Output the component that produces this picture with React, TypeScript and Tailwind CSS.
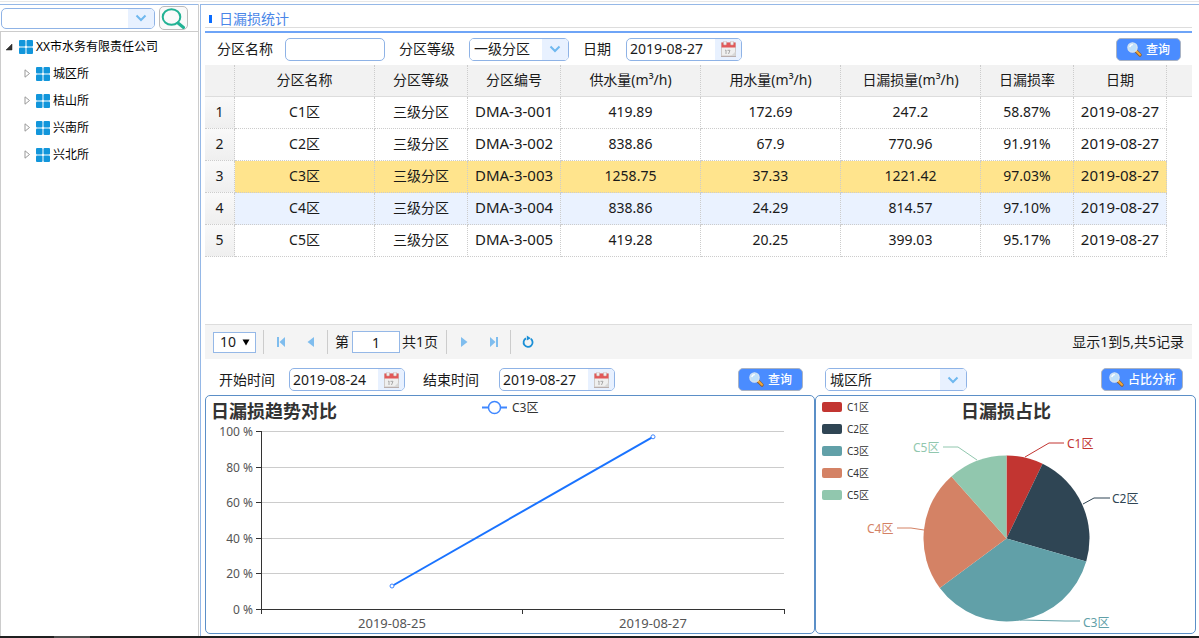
import { useState, type ReactNode } from 'react'

interface Zone {
  name: string
  code: string
  supply: string
  usage: string
  loss: string
  rate: string
  color: string
}

const DAY = '2019-08-27'

const zones: Zone[] = [
  { name: 'C1区', code: 'DMA-3-001', supply: '419.89', usage: '172.69', loss: '247.2', rate: '58.87%', color: '#c23531' },
  { name: 'C2区', code: 'DMA-3-002', supply: '838.86', usage: '67.9', loss: '770.96', rate: '91.91%', color: '#2f4554' },
  { name: 'C3区', code: 'DMA-3-003', supply: '1258.75', usage: '37.33', loss: '1221.42', rate: '97.03%', color: '#61a0a8' },
  { name: 'C4区', code: 'DMA-3-004', supply: '838.86', usage: '24.29', loss: '814.57', rate: '97.10%', color: '#d48265' },
  { name: 'C5区', code: 'DMA-3-005', supply: '419.28', usage: '20.25', loss: '399.03', rate: '95.17%', color: '#91c7ae' },
]

const headers = ['分区名称', '分区等级', '分区编号', '供水量(m³/h)', '用水量(m³/h)', '日漏损量(m³/h)', '日漏损率', '日期']

const stations = ['城区所', '桔山所', '兴南所', '兴北所']

function Chevron() {
  return (
    <svg width="12" height="8" viewBox="0 0 12 8" fill="none" stroke="#6fb8ef" strokeWidth="2">
      <path d="M1.500 1.500 6 6l4.500-4.500" />
    </svg>
  )
}

function CalendarIcon() {
  return (
    <svg width="15" height="16" viewBox="0 0 15 16">
      <rect x="0.500" y="2" width="14" height="13" fill="#efefef" stroke="#cfcac8" />
      <rect x="0.500" y="1.500" width="14" height="5" fill="#e2595a" />
      <rect x="2.500" y="0" width="3" height="4" rx="1" fill="#eee" stroke="#c9a7a7" strokeWidth="0.5" />
      <rect x="9.500" y="0" width="3" height="4" rx="1" fill="#eee" stroke="#c9a7a7" strokeWidth="0.5" />
      <path d="M4 9.500 5 9v4M6.500 9.300h2.500L7.500 13" fill="none" stroke="#a8a8a8" />
      <path d="M14.500 10.500 10 15h4.500z" fill="#d8d8d8" />
      <path d="M0 15.500h15" stroke="#b9aead" />
    </svg>
  )
}

function LensIcon() {
  return (
    <svg width="15" height="15" viewBox="0 0 15 15" className="shrink-0">
      <path d="m8.500 8.500 4.500 4.500" stroke="#8a5a2b" strokeWidth="3.200" strokeLinecap="round" />
      <path d="m9 8.800 4 4" stroke="#f2a93b" strokeWidth="2" strokeLinecap="round" />
      <circle cx="5.500" cy="5.500" r="4.600" fill="#bfe0fb" stroke="#dbe6f0" strokeWidth="1.300" />
      <path d="M2.800 5.200a3 3 0 0 1 3-2.500" stroke="#fff" strokeWidth="1.300" fill="none" />
    </svg>
  )
}

function FourSquares() {
  return (
    <svg width="14" height="14" viewBox="0 0 14 14" fill="#1296db">
      <rect width="6.500" height="6.500" rx="1" />
      <rect x="7.500" width="6.500" height="6.500" rx="1" />
      <rect y="7.500" width="6.500" height="6.500" rx="1" />
      <rect x="7.500" y="7.500" width="6.500" height="6.500" rx="1" />
    </svg>
  )
}

function Label({ htmlFor, children }: { htmlFor: string; children: ReactNode }) {
  return <label htmlFor={htmlFor} className="w-14 shrink-0">{children}</label>
}

function DateBox({ id, value }: { id: string; value: string }) {
  return (
    <div className="flex h-[23px] w-[116px] shrink-0 overflow-hidden rounded-[5px] border border-[#8fb3e6] bg-white">
      <input id={id} defaultValue={value} className="w-[88px] min-w-0 pl-[3px] leading-5 outline-none" />
      <button aria-label="选择日期" className="flex flex-1 items-center justify-center bg-[#e8f1ff]">
        <CalendarIcon />
      </button>
    </div>
  )
}

function SelectBox({ id, label, options, className }: { id: string; label?: string; options: string[]; className: string }) {
  return (
    <div className={`relative h-[23px] shrink-0 overflow-hidden rounded-[5px] border border-[#8fb3e6] ${className}`}>
      <select id={id} aria-label={label} className="block h-full w-full appearance-none bg-white pr-7 pl-1 leading-5 outline-none">
        {options.map((o) => <option key={o}>{o}</option>)}
      </select>
      <span className="pointer-events-none absolute inset-y-0 right-0 flex w-[26px] items-center justify-center bg-[#e8f1ff]">
        <Chevron />
      </span>
    </div>
  )
}

function QueryButton({ className, children }: { className: string; children: ReactNode }) {
  return (
    <button className={`ml-auto flex h-[23px] shrink-0 items-center rounded-[5px] border border-[#a9b3c4] bg-[#4a8cff] text-xs font-medium text-white ${className}`}>
      <LensIcon />
      <span className="pt-px whitespace-nowrap">{children}</span>
    </button>
  )
}

function Sidebar() {
  return (
    <aside className="flex w-[199px] shrink-0 flex-col border-r border-[#ccc]">
      <div className="flex h-7 items-center gap-1 border-t border-b border-t-[#95b8e7] border-b-[#ccc] pl-px">
        <div className="flex h-[21px] w-[154px] overflow-hidden rounded-[5px] border border-[#8fb3e6]">
          <input aria-label="搜索分区" className="min-w-0 flex-1 px-1 text-xs outline-none" />
          <button aria-label="展开" className="flex w-[26px] items-center justify-center bg-[#e8f1ff]"><Chevron /></button>
        </div>
        <button aria-label="搜索" className="flex h-6 w-[29px] items-center justify-center rounded-[5px] border border-[#bbb] bg-[#fafafa]">
          <svg width="25" height="21" viewBox="0 0 25 21" fill="none" stroke="#22b294">
            <ellipse cx="10.500" cy="9" rx="8.800" ry="7.800" strokeWidth="2" />
            <path d="m17 15 5.500 4.500" strokeWidth="3" strokeLinecap="round" />
          </svg>
        </button>
      </div>
      <div className="flex-1 border-l border-[#ccc] pt-px text-xs text-black">
        <div className="flex h-[27px] items-center pl-1">
          <svg width="8" height="8" viewBox="0 0 8 8" className="mr-[6px]">
            <path d="M7 1v6H1z" fill="#333" stroke="#222" strokeWidth="0.5" />
          </svg>
          <FourSquares />
          <span className="ml-[3px]">XX市水务有限责任公司</span>
        </div>
        {stations.map((s) => (
          <div key={s} className="flex h-[27px] items-center pl-[23px]">
            <svg width="7" height="9" viewBox="0 0 7 9" className="mr-[5px]">
              <path d="M1 .8v7.400l4.500-3.700z" fill="#fff" stroke="#999" />
            </svg>
            <FourSquares />
            <span className="ml-[3px]">{s}</span>
          </div>
        ))}
      </div>
    </aside>
  )
}

function ZoneTable() {
  const [selected, setSelected] = useState('C3区')
  const cell = 'border-r border-b border-dotted border-[#ccc] p-0 pb-[2px]'

  function rowColor(z: Zone) {
    if (z.name === selected) return 'bg-[#ffe48d]'
    return z.name === 'C4区' ? 'bg-[#eaf2ff]' : 'bg-white'
  }

  return (
    <table className="w-full table-fixed border-separate border-spacing-0 text-center text-sm">
      <colgroup>
        <col className="w-[30px]" />
        <col className="w-[140px]" />
        <col className="w-[93px]" />
        <col className="w-[93px]" />
        <col className="w-[140px]" />
        <col className="w-[140px]" />
        <col className="w-[140px]" />
        <col className="w-[93px]" />
        <col className="w-[93px]" />
        <col />
      </colgroup>
      <thead className="bg-[#f2f2f2]">
        <tr className="h-8">
          <th className="border-r border-b border-r-[#ccc] border-b-[#ddd] [border-right-style:dotted] p-0" />
          {headers.map((h) => (
            <th key={h} className="border-r border-b border-r-[#ccc] border-b-[#ddd] [border-right-style:dotted] p-0 pb-[2px] font-normal">{h}</th>
          ))}
          <th className="border-b border-[#ddd] p-0" />
        </tr>
      </thead>
      <tbody>
        {zones.map((z, i) => (
          <tr key={z.name} className="h-8" onClick={() => setSelected(z.name)}>
            <td className={`${cell} bg-linear-to-b from-[#f9f9f9] to-[#efefef]`}>{i + 1}</td>
            <td className={`${cell} ${rowColor(z)}`}>{z.name}</td>
            <td className={`${cell} ${rowColor(z)}`}>三级分区</td>
            <td className={`${cell} ${rowColor(z)} text-[15px]`}>{z.code}</td>
            <td className={`${cell} ${rowColor(z)}`}>{z.supply}</td>
            <td className={`${cell} ${rowColor(z)}`}>{z.usage}</td>
            <td className={`${cell} ${rowColor(z)}`}>{z.loss}</td>
            <td className={`${cell} ${rowColor(z)}`}>{z.rate}</td>
            <td className={`${cell} ${rowColor(z)} text-[15px]`}>{DAY}</td>
            <td className="p-0" />
          </tr>
        ))}
      </tbody>
    </table>
  )
}

function PageButton({ label, children }: { label: string; children: ReactNode }) {
  return (
    <button aria-label={label} className="flex h-6 w-[30px] items-center justify-center">
      <svg width="14" height="14" viewBox="0 0 14 14" fill="#7fbdee">{children}</svg>
    </button>
  )
}

function Divider() {
  return <span className="h-6 w-px bg-[#ccc]" />
}

function Pager() {
  return (
    <div className="flex h-[35px] shrink-0 items-center border-t border-[#ddd] bg-[#f4f4f4] pr-2 pl-2">
      <div className="relative mr-[7px]">
        <select aria-label="每页条数" className="block h-[21px] w-[43px] appearance-none border border-[#95b8e7] bg-white pl-[6px] leading-4 outline-none">
          <option>10</option>
          <option>20</option>
        </select>
        <svg width="8" height="7" viewBox="0 0 8 7" className="pointer-events-none absolute top-[7px] right-[6px]">
          <path d="M.5.500h7L4 6.500z" fill="#000" />
        </svg>
      </div>
      <Divider />
      <span className="w-[2px]" />
      <PageButton label="首页"><path d="M3 2h2v10H3zM11 2v10L5.500 7z" /></PageButton>
      <PageButton label="上一页"><path d="M10 2v10L3.500 7z" /></PageButton>
      <span className="w-px" />
      <Divider />
      <label htmlFor="page" className="mr-[3px] ml-[7px]">第</label>
      <input id="page" defaultValue="1" className="mr-[2px] h-[22px] w-12 border border-[#95b8e7] bg-white text-center outline-none" />
      <span className="mr-2">共1页</span>
      <Divider />
      <span className="w-[2px]" />
      <PageButton label="下一页"><path d="M4 2v10l6.500-5z" /></PageButton>
      <PageButton label="末页"><path d="M3 2v10l5.500-5zM9 2h2v10H9z" /></PageButton>
      <span className="w-px" />
      <Divider />
      <span className="w-[2px]" />
      <PageButton label="刷新">
        <path d="M9.800 3.800A4.500 4.500 0 1 1 5 3.400" fill="none" stroke="#1b8fd6" strokeWidth="1.800" />
        <path d="m5.800.600 4 2.600-4 2.400z" fill="#1b8fd6" />
      </PageButton>
      <span className="ml-auto">显示1到5,共5记录</span>
    </div>
  )
}

const ticks = [
  { label: '100 %', y: 35.5 },
  { label: '80 %', y: 71.5 },
  { label: '60 %', y: 106.5 },
  { label: '40 %', y: 142.5 },
  { label: '20 %', y: 177.5 },
  { label: '0 %', y: 213.5 },
]

function TrendChart() {
  return (
    <svg viewBox="0 0 608 237" className="block w-full text-xs" fill="#555">
      <text x="5" y="22" fill="#333" className="text-lg font-bold">日漏损趋势对比</text>
      <path d="M276 11.500h25" stroke="#3f87ff" strokeWidth="2" />
      <circle cx="288.500" cy="11.500" r="6" fill="#fff" stroke="#3f87ff" strokeWidth="1.500" />
      <text x="306" y="16" fill="#333">C3区</text>
      {ticks.map((t) => (
        <g key={t.label}>
          <path d={`M55 ${t.y}H578`} stroke="#ccc" />
          <path d={`M50 ${t.y}h5`} stroke="#333" />
          <text x="47" y={t.y + 4.5} textAnchor="end">{t.label}</text>
        </g>
      ))}
      <path d="M55.500 35v183M55 213.500h524M316.500 213v5M578.500 213v5" fill="none" stroke="#333" />
      <path d="m186 190 261-149.200" stroke="#1a73ff" strokeWidth="2" />
      <circle cx="186" cy="190" r="2" fill="#fff" stroke="#3f87ff" />
      <circle cx="447" cy="40.800" r="2" fill="#fff" stroke="#3f87ff" />
      <text x="186" y="232" textAnchor="middle" className="text-[13px]">2019-08-25</text>
      <text x="447" y="232" textAnchor="middle" className="text-[13px]">2019-08-27</text>
    </svg>
  )
}

const callouts = [
  { line: '209,61 233,47 248,47', x: 251, y: 52 },
  { line: '267,108 278,102 294,102', x: 296, y: 107 },
  { line: '204,224 249,225 264,225', x: 267, y: 231 },
  { line: '108,134 95,132 81,132', x: 51, y: 137 },
  { line: '161,64 142,51 127,51', x: 97, y: 56 },
]

const CX = 190.5
const CY = 142.5
const R = 83

function slicePath(from: number, to: number) {
  const point = (t: number) => `${CX + R * Math.sin(t * 2 * Math.PI)} ${CY - R * Math.cos(t * 2 * Math.PI)}`
  return `M${CX} ${CY}L${point(from)}A${R} ${R} 0 ${to - from > 0.5 ? 1 : 0} 1 ${point(to)}Z`
}

function ShareChart() {
  const total = zones.reduce((sum, z) => sum + Number(z.loss), 0)
  const starts = zones.map((_, i) => zones.slice(0, i).reduce((sum, z) => sum + Number(z.loss), 0) / total)

  return (
    <svg viewBox="0 0 379 237" className="block w-full text-xs">
      <text x="145" y="22" fill="#333" className="text-lg font-bold">日漏损占比</text>
      {zones.map((z, i) => (
        <g key={z.name} fill={z.color}>
          <rect x="6" y={6 + i * 22} width="20" height="10" rx="2" />
          <text x="31" y={15 + i * 22} fill="#333" className="text-[10px]">{z.name}</text>
          <path d={slicePath(starts[i], starts[i] + Number(z.loss) / total)} />
          <polyline points={callouts[i].line} fill="none" stroke={z.color} />
          <text x={callouts[i].x} y={callouts[i].y}>{z.name}</text>
        </g>
      ))}
    </svg>
  )
}

export default function App() {
  return (
    <div className="flex min-h-screen flex-col bg-white font-['Noto_Sans','Noto_Sans_CJK_SC',sans-serif] text-sm text-[#1a1a1a]">
      <div className="h-[4px] pt-px">
        <div className="h-px bg-[#e8e8e8]" />
      </div>
      <div className="flex flex-1 gap-px">
        <Sidebar />
        <main className="flex min-w-0 flex-1 flex-col border-t border-l border-[#95b8e7] pl-1">
          <div className="mr-[7px] flex flex-1 flex-col">
            <div className="h-7 border-b-2 border-[#6ea4f7]">
              <h1 className="flex h-[23px] items-center gap-[7px] border-b border-[#ddd] pt-[5px] pl-1 text-[#4a86e8]">
                <span className="h-2 w-[3px] bg-[#0a6cff]" />
                日漏损统计
              </h1>
            </div>
            <div className="flex h-8 shrink-0 items-center pr-[11px] pl-3">
              <Label htmlFor="zone-name">分区名称</Label>
              <input id="zone-name" className="mr-[14px] ml-3 h-[23px] w-[100px] rounded-[5px] border border-[#8fb3e6] px-1 outline-none" />
              <Label htmlFor="zone-level">分区等级</Label>
              <SelectBox id="zone-level" options={['一级分区', '二级分区', '三级分区']} className="mr-[14px] ml-[14px] w-[100px]" />
              <label htmlFor="day" className="mr-[15px]">日期</label>
              <DateBox id="day" value={DAY} />
              <QueryButton className="gap-1 px-[10px]">查询</QueryButton>
            </div>
            <div className="flex-1">
              <ZoneTable />
            </div>
            <Pager />
          </div>
          <div className="mr-[3px] mb-[2px] flex">
            <section className="min-w-0 flex-[610_610_0%]">
              <div className="flex h-9 items-center pt-[5px] pr-3 pl-[14px]">
                <Label htmlFor="start">开始时间</Label>
                <span className="w-[14px]" />
                <DateBox id="start" value="2019-08-24" />
                <span className="w-[18px]" />
                <Label htmlFor="end">结束时间</Label>
                <span className="w-5" />
                <DateBox id="end" value={DAY} />
                <QueryButton className="gap-1 px-[10px]">查询</QueryButton>
              </div>
              <div className="rounded-[5px] border border-[#5b8fc7]">
                <TrendChart />
              </div>
            </section>
            <section className="min-w-0 flex-[381_381_0%]">
              <div className="flex h-9 items-center pt-[5px] pr-[13px] pl-[10px]">
                <SelectBox id="station" label="所属站点" options={stations} className="w-[142px]" />
                <QueryButton className="gap-1 pr-[6px] pl-[7px]">占比分析</QueryButton>
              </div>
              <div className="rounded-[5px] border border-[#5b8fc7]">
                <ShareChart />
              </div>
            </section>
          </div>
        </main>
      </div>
      <div className="h-[2px] bg-[#1f1f1f] pl-[54px]">
        <div className="h-full w-9 bg-[#4d4d4d]" />
      </div>
    </div>
  )
}
